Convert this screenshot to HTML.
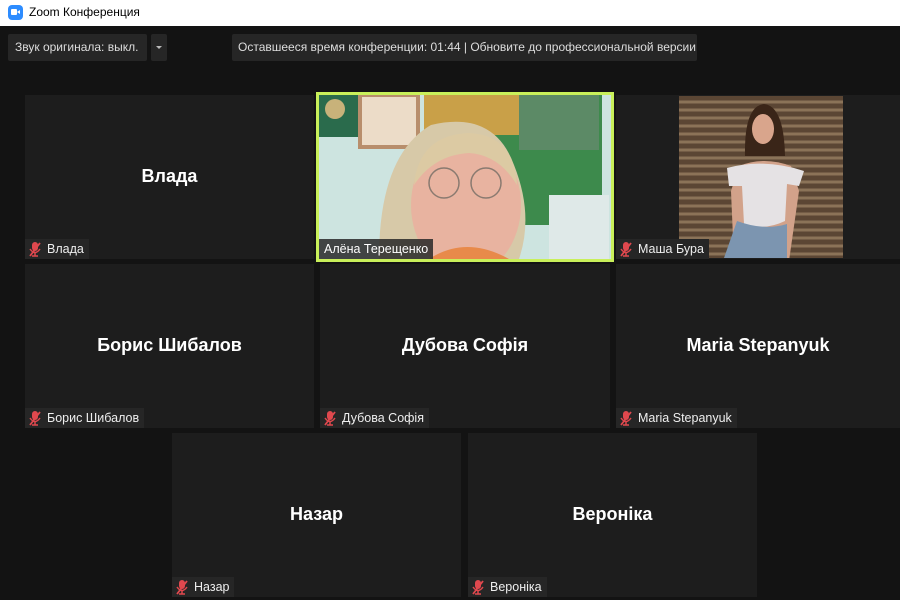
<!DOCTYPE html>
<html><head><meta charset="utf-8"><style>
*{margin:0;padding:0;box-sizing:border-box}
body{width:900px;height:600px;overflow:hidden;background:#131313;font-family:"Liberation Sans","DejaVu Sans",sans-serif;position:relative}
.title{position:absolute;left:0;top:0;width:900px;height:26px;background:#fff;color:#000;font-size:12px}
.title .ic{position:absolute;left:8px;top:5px;width:15px;height:15px;border-radius:4px;background:#2d8cff}
.title .ic:before{content:"";position:absolute;left:3px;top:4px;width:6px;height:6px;background:#fff;border-radius:1px}
.title .ic:after{content:"";position:absolute;left:9px;top:5px;border-style:solid;border-width:2.5px 3px 2.5px 0;border-color:transparent #fff transparent transparent}
.title span{position:absolute;left:29px;top:5px}
.btn{position:absolute;top:34px;height:27px;background:#262626;color:#ddd;font-size:12px;line-height:27px;border-radius:2px}
.tile{position:absolute;background:#1d1d1d}
.tile .nm{position:absolute;left:0;right:0;top:50%;margin-top:-11px;text-align:center;color:#fff;font-weight:bold;font-size:18px}
.lab{position:absolute;left:0;bottom:0;height:20px;background:#262626;color:#eee;font-size:12.5px;line-height:20px;padding:0 5px 0 22px}
.lab svg{position:absolute;left:4px;top:3px}
</style></head><body>
<div class="title"><div class="ic"></div><span>Zoom Конференция</span></div>
<div class="btn" style="left:8px;width:139px;padding-left:7px">Звук оригинала: выкл.</div>
<div class="btn" style="left:151px;width:16px"><div style="position:absolute;left:5px;top:12px;border-style:solid;border-width:3px 3px 0 3px;border-color:#bbb transparent transparent transparent"></div></div>
<div class="btn" style="left:232px;width:465px;padding-left:6px">Оставшееся время конференции: 01:44 | Обновите до профессиональной версии</div>

<svg width="0" height="0" style="position:absolute"><defs><g id="mic"><rect x="3" y="0" width="6" height="9" rx="3" fill="#e0484e"/><path d="M1 7 Q6 14 11 7 M6 11 V14 M3 14 H9" stroke="#e0484e" stroke-width="1.5" fill="none"/><path d="M1 14 L11 1" stroke="#e0484e" stroke-width="1.8"/></g></defs></svg>

<div class="tile" style="left:25px;top:95px;width:289px;height:164px"><div class="nm">Влада</div><div class="lab"><svg width="12" height="15"><use href="#mic"/></svg>Влада</div></div>

<div style="position:absolute;left:316px;top:92px;width:298px;height:170px;border:3px solid #c9f05a;background:#cfe6e2;overflow:hidden">
<svg width="292" height="164" style="position:absolute;left:0;top:0">
<rect width="292" height="164" fill="#cde4e0"/>
<rect x="0" y="0" width="40" height="42" fill="#2a6b4c"/>
<circle cx="16" cy="14" r="10" fill="#c8b27a"/>
<rect x="39" y="0" width="62" height="54" fill="#b88e6c"/><rect x="43" y="2" width="54" height="48" fill="#ecdcc8"/>
<rect x="105" y="0" width="178" height="130" fill="#3d8a4c"/>
<rect x="105" y="0" width="95" height="40" fill="#c9a048"/>
<rect x="200" y="0" width="80" height="55" fill="#5c8a66"/>
<rect x="230" y="100" width="60" height="64" fill="#dfe9e8"/>
<path d="M60 164 Q60 60 112 30 Q175 15 195 70 Q215 120 200 164Z" fill="#d7c9a8"/>
<ellipse cx="147" cy="110" rx="55" ry="70" fill="#e8b3a0"/>
<path d="M95 90 Q100 40 150 38 Q195 40 198 90 Q180 60 150 58 Q115 60 95 90Z" fill="#dccaa3"/>
<path d="M110 164 Q147 140 190 164Z" fill="#e88a4a"/>
<circle cx="125" cy="88" r="15" fill="none" stroke="#8a7a70" stroke-width="1.5"/><circle cx="167" cy="88" r="15" fill="none" stroke="#8a7a70" stroke-width="1.5"/>
</svg>
<div class="lab" style="padding-left:5px;color:#fff;background:rgba(40,40,40,.85)">Алёна Терещенко</div>
</div>

<div class="tile" style="left:616px;top:95px;width:284px;height:164px">
<svg width="164" height="162" style="position:absolute;left:63px;top:1px">
<rect width="164" height="162" fill="#5b4634"/>
<g stroke="#8b7358" stroke-width="3"><path d="M0 6H164M0 14H164M0 22H164M0 30H164M0 38H164M0 46H164M0 54H164M0 62H164M0 70H164M0 78H164M0 86H164M0 94H164M0 102H164M0 110H164M0 118H164M0 126H164M0 134H164M0 142H164M0 150H164M0 158H164"/></g>
<path d="M66 60 Q65 10 85 8 Q105 10 106 60Z" fill="#3a2518"/>
<ellipse cx="84" cy="33" rx="11" ry="15" fill="#d9a58c"/>
<path d="M60 70 Q85 60 112 70 L120 95 L110 165 L55 165 L52 95Z" fill="#d2a28a"/>
<path d="M48 72 Q85 62 125 75 L120 90 L108 88 L106 125 Q85 135 65 128 L63 90 L50 90Z" fill="#e5e2e4"/>
<path d="M58 125 Q85 135 108 128 L108 162 L45 162Z" fill="#7c95b0"/>
</svg>
<div class="lab"><svg width="12" height="15"><use href="#mic"/></svg>Маша Бура</div></div>

<div class="tile" style="left:25px;top:264px;width:289px;height:164px"><div class="nm">Борис Шибалов</div><div class="lab"><svg width="12" height="15"><use href="#mic"/></svg>Борис Шибалов</div></div>
<div class="tile" style="left:320px;top:264px;width:290px;height:164px"><div class="nm">Дубова Софія</div><div class="lab"><svg width="12" height="15"><use href="#mic"/></svg>Дубова Софія</div></div>
<div class="tile" style="left:616px;top:264px;width:284px;height:164px"><div class="nm">Maria Stepanyuk</div><div class="lab"><svg width="12" height="15"><use href="#mic"/></svg>Maria Stepanyuk</div></div>

<div class="tile" style="left:172px;top:433px;width:289px;height:164px"><div class="nm">Назар</div><div class="lab"><svg width="12" height="15"><use href="#mic"/></svg>Назар</div></div>
<div class="tile" style="left:468px;top:433px;width:289px;height:164px"><div class="nm">Вероніка</div><div class="lab"><svg width="12" height="15"><use href="#mic"/></svg>Вероніка</div></div>
</body></html>
